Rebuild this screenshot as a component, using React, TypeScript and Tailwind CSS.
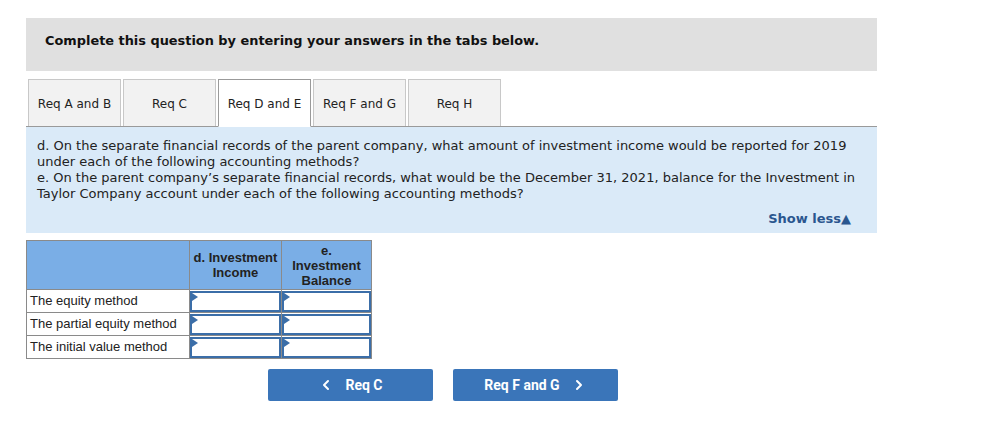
import { ChevronLeft, ChevronRight } from 'lucide-react'

const tabs = ['Req A and B', 'Req C', 'Req D and E', 'Req F and G', 'Req H']
const rows = ['The equity method', 'The partial equity method', 'The initial value method']

function InputCell() {
  return (
    <td className="border border-[#8a8a8a] p-0 h-[23px]">
      <div className="relative h-[21px] w-full border-2 border-[#3b6ea8] bg-white">
        <div className="absolute left-0 top-0 h-0 w-0 border-y-[4px] border-l-[6px] border-y-transparent border-l-[#3b6ea8]" />
      </div>
    </td>
  )
}

export default function App() {
  return (
    <div className="bg-white w-[982px] h-[430px] pt-[18px] pl-[26px]" style={{ fontFamily: '"DejaVu Sans", Verdana, sans-serif' }}>
      <div className="w-[851px]">
        {/* Header */}
        <div className="h-[53px] bg-[#e0e0e0] flex items-center pl-[19px] pb-[7px]">
          <p className="text-[12.9px] font-bold text-[#111]">Complete this question by entering your answers in the tabs below.</p>
        </div>

        {/* Tabs */}
        <div className="mt-[8px] flex border-b border-[#9a9a9a] pl-[2px]">
          {tabs.map((t, i) => (
            <div
              key={t}
              className={`w-[93px] h-[47px] mr-[2px] flex items-center justify-center pt-[1px] text-[12px] text-[#222] border ${
                i === 2 ? 'bg-white border-[#9a9a9a] border-b-white -mb-px h-[48px]' : 'bg-[#f2f2f2] border-[#c8c8c8] border-b-0'
              }`}
            >
              {t}
            </div>
          ))}
        </div>

        {/* Question panel */}
        <div className="bg-[#daeaf8] h-[106px] px-[11px] pt-[11px] text-[13px] leading-[16px] text-[#222] relative">
          <p>d. On the separate financial records of the parent company, what amount of investment income would be reported for 2019 under each of the following accounting methods?</p>
          <p>e. On the parent company’s separate financial records, what would be the December 31, 2021, balance for the Investment in Taylor Company account under each of the following accounting methods?</p>
          <div className="absolute right-[26px] bottom-[6px] text-[13px] font-bold text-[#2a568f]">Show less▲</div>
        </div>

        {/* Table */}
        <table className="mt-[7px] border-collapse text-[13px] text-[#222]" style={{ fontFamily: '"Liberation Sans", Arial, sans-serif' }}>
          <thead>
            <tr className="bg-[#7aaee6] h-[49px]">
              <th className="w-[163px] border border-[#8a8a8a]"></th>
              <th className="w-[92px] border border-[#8a8a8a] font-bold leading-[15px] text-center">d. Investment<br />Income</th>
              <th className="w-[90px] border border-[#8a8a8a] font-bold leading-[15px] text-center">e.<br />Investment<br />Balance</th>
            </tr>
          </thead>
          <tbody>
            {rows.map((r) => (
              <tr key={r}>
                <td className="border border-[#8a8a8a] px-[3px] h-[23px] whitespace-nowrap">{r}</td>
                <InputCell />
                <InputCell />
              </tr>
            ))}
          </tbody>
        </table>

        {/* Buttons */}
        <div className="mt-[10px] flex gap-[20px] pl-[242px]" style={{ fontFamily: 'Roboto, Arial, sans-serif' }}>
          <button className="w-[165px] h-[32px] bg-[#3a75b9] rounded-[2px] flex items-center justify-center gap-[11px] text-white text-[14px] font-bold">
            <ChevronLeft size={16} strokeWidth={3} />
            <span>Req C</span>
          </button>
          <button className="w-[165px] h-[32px] bg-[#3a75b9] rounded-[2px] flex items-center justify-center gap-[11px] text-white text-[14px] font-bold">
            <span>Req F and G</span>
            <ChevronRight size={16} strokeWidth={3} />
          </button>
        </div>
      </div>
    </div>
  )
}
